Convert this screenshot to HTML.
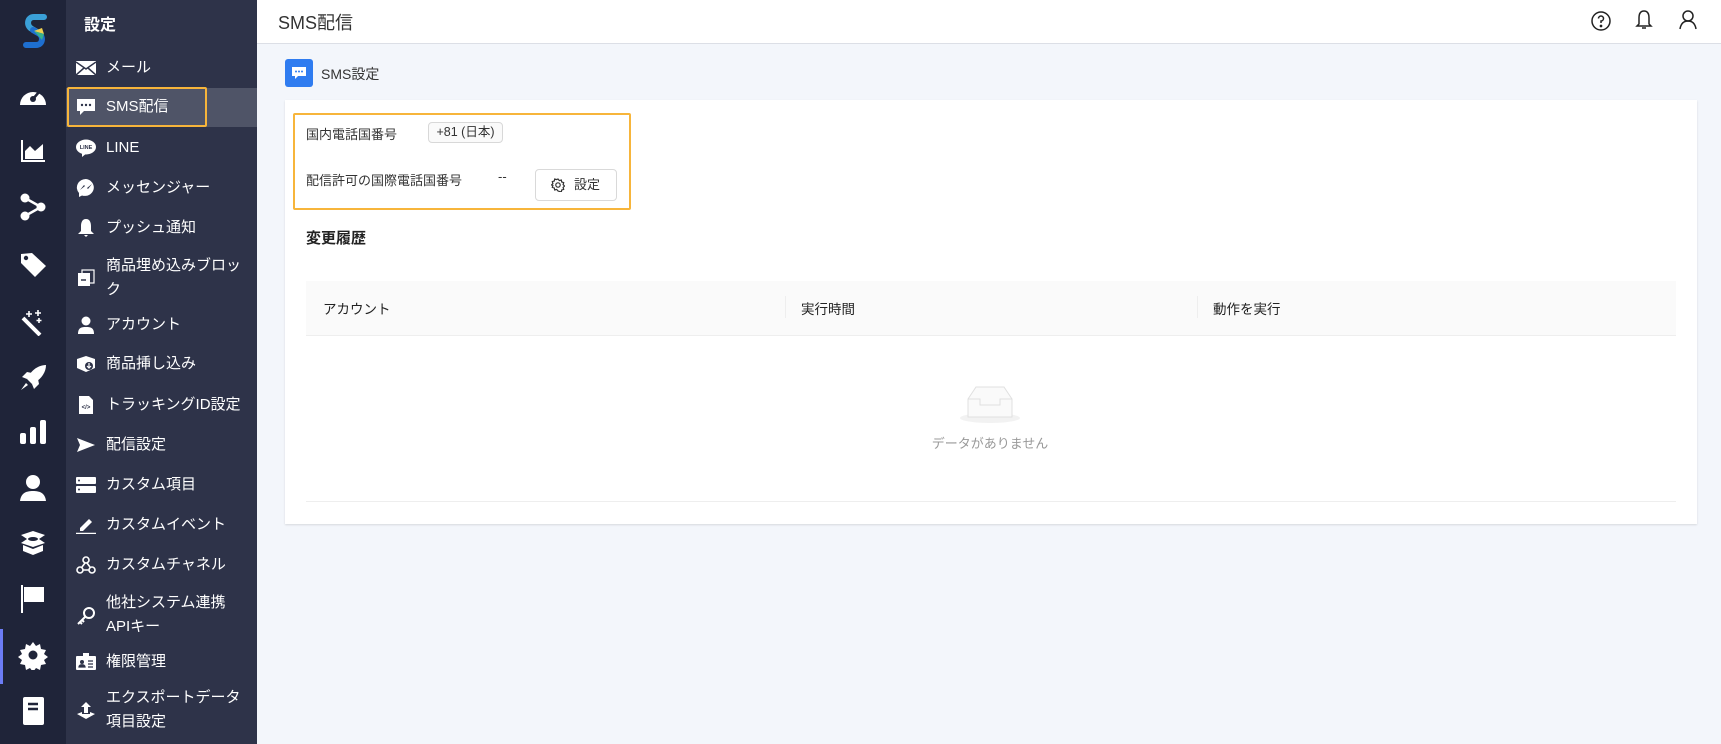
<!DOCTYPE html>
<html><head><meta charset="utf-8"><style>
*{box-sizing:border-box;margin:0;padding:0}
body{width:1721px;height:744px;overflow:hidden;background:#f3f6fb;font-family:"Liberation Sans","Noto Sans CJK JP",sans-serif;position:relative}
.rail{position:absolute;left:0;top:0;width:66px;height:744px;background:#1f2439}
.side{position:absolute;left:66px;top:0;width:191px;height:744px;background:#2e3349;color:#fff}
.ri{position:absolute;left:17px;width:32px;height:32px;display:flex;align-items:center;justify-content:center}
.it{position:absolute;left:0;width:191px;font-size:15px;color:#fff;line-height:24px;padding-left:40px}
.it .ic{position:absolute;left:10px;top:3px;width:20px;height:18px;display:flex;align-items:center;justify-content:center}
.hdr{position:absolute;left:257px;top:0;right:0;height:44px;background:#fff;border-bottom:1px solid #dcdfe6}
.card{position:absolute;left:285px;top:100px;width:1412px;height:424px;background:#fff;box-shadow:0 1px 2px rgba(0,0,0,.12)}
.t{position:absolute;font-size:13px;color:#333;white-space:nowrap}
</style></head><body>
<div class="rail">
 <svg style="position:absolute;left:22px;top:14px" width="26" height="34" viewBox="0 0 26 34"><path d="M22 3 H12 C5 3 4 12 10 15 L15 18" stroke="#3aa0d8" stroke-width="6" fill="none" stroke-linecap="round"/><path d="M4 31 H14 C21 31 22 22 16 19 L11 16" stroke="#1e6fd0" stroke-width="6" fill="none" stroke-linecap="round"/><path d="M12 17 L22 20 L20 14Z" fill="#f0d050"/><path d="M12 17 L20 26 L22 20Z" fill="#38b18a"/></svg>
 <div class="ri" style="top:79px"><svg width="30" height="24" viewBox="0 0 30 24"><path d="M2 22 A13 13 0 1 1 28 22 Z" fill="#fff"/><circle cx="15" cy="16" r="3" fill="#1f2439"/><path d="M15 16 L21 9" stroke="#1f2439" stroke-width="2.5"/></svg></div>
 <div class="ri" style="top:135px"><svg width="26" height="24" viewBox="0 0 26 24"><path d="M2 1 V22 H25" stroke="#fff" stroke-width="2" fill="none"/><path d="M5 20 V12 L10 7 L15 12 L23 5 V20Z" fill="#fff"/></svg></div>
 <div class="ri" style="top:191px"><svg width="28" height="28" viewBox="0 0 28 28"><circle cx="6" cy="5" r="4.5" fill="#fff"/><circle cx="6" cy="23" r="4.5" fill="#fff"/><circle cx="22" cy="14" r="4.5" fill="#fff"/><path d="M6 5 L22 14 L6 23" stroke="#fff" stroke-width="2.5" fill="none"/></svg></div>
 <div class="ri" style="top:249px"><svg width="28" height="28" viewBox="0 0 28 28"><path d="M2 3 V12 L16 26 L27 15 L13 2 Z" fill="#fff"/><circle cx="7" cy="7" r="2.2" fill="#1f2439"/></svg></div>
 <div class="ri" style="top:306px"><svg width="28" height="28" viewBox="0 0 28 28"><path d="M4 10 L21 27" stroke="#fff" stroke-width="4"/><path d="M10 3v6M7 6h6M19 2v6M16 5h6M20 10v5M17.5 12.5h5" stroke="#fff" stroke-width="1.6"/></svg></div>
 <div class="ri" style="top:362px"><svg width="28" height="28" viewBox="0 0 28 28"><path d="M27 1 C18 1 11 8 8 15 L13 20 C20 17 27 10 27 1Z" fill="#fff"/><path d="M8 15 L3 13 L8 8 L13 9Z M13 20 L15 25 L20 20 L19 15Z" fill="#fff"/><path d="M7 19 L2 26 L9 21Z" fill="#fff"/></svg></div>
 <div class="ri" style="top:416px"><svg width="28" height="26" viewBox="0 0 28 26"><rect x="1" y="14" width="6" height="11" rx="2" fill="#fff"/><rect x="11" y="8" width="6" height="17" rx="2" fill="#fff"/><rect x="21" y="1" width="6" height="24" rx="2" fill="#fff"/></svg></div>
 <div class="ri" style="top:472px"><svg width="28" height="28" viewBox="0 0 28 28"><circle cx="14" cy="8" r="7" fill="#fff"/><path d="M1 27 C2 19 7 17 14 17 C21 17 26 19 27 27Z" fill="#fff"/></svg></div>
 <div class="ri" style="top:527px"><svg width="28" height="26" viewBox="0 0 28 26"><path d="M2 5 L14 1 L26 5 L20 9 L26 13 L14 17 L2 13 L8 9Z" fill="#fff"/><path d="M4 15 L14 19 L24 15 V21 L14 25 L4 21Z" fill="#fff"/><ellipse cx="14" cy="9" rx="5" ry="2" fill="#1f2439"/></svg></div>
 <div class="ri" style="top:583px"><svg width="26" height="30" viewBox="0 0 26 30"><path d="M2 1 V29" stroke="#fff" stroke-width="2"/><path d="M4 3 H24 V18 H4Z" fill="#fff"/></svg></div>
 <div style="position:absolute;left:0;top:629px;width:3px;height:55px;background:#6c7cf5"></div>
 <div class="ri" style="top:639px"><svg width="30" height="30" viewBox="0 0 30 30"><path d="M15 2 l3 4 4-2 1 5 5 1-2 4 4 3-4 3 2 4-5 1-1 5-4-2-3 4-3-4-4 2-1-5-5-1 2-4-4-3 4-3-2-4 5-1 1-5 4 2z" fill="#fff"/><circle cx="15" cy="15" r="4.5" fill="#1f2439"/></svg></div>
 <div class="ri" style="top:695px"><svg width="26" height="30" viewBox="0 0 26 30"><rect x="3" y="1" width="21" height="28" rx="2" fill="#fff"/><path d="M8 8 H18 M8 13 H18" stroke="#1f2439" stroke-width="2.5"/></svg></div>
</div>
<div class="side">
 <div style="position:absolute;left:18px;top:11px;font-size:16px;font-weight:bold">設定</div>
 <div style="position:absolute;left:0;top:88px;width:191px;height:39px;background:#4f5467"></div>
 <div style="position:absolute;left:1px;top:87px;width:140px;height:40px;border:2px solid #f7b53b;border-radius:2px"></div>
 <div class="it" style="top:56px"><span class="ic"><svg width="20" height="16"><rect x="0" y="1" width="20" height="14" fill="#fff"/><path d="M0 2 L10 9 L20 2 M0 15 L8 8 M20 15 L12 8" stroke="#2e3349" stroke-width="1.5" fill="none"/></svg></span>メール</div>
 <div class="it" style="top:95px"><span class="ic"><svg width="20" height="18"><path d="M1 1 H19 V13 H8 L4 17 V13 H1Z" fill="#fff"/><circle cx="6" cy="7" r="1.2" fill="#2e3349"/><circle cx="10" cy="7" r="1.2" fill="#2e3349"/><circle cx="14" cy="7" r="1.2" fill="#2e3349"/></svg></span>SMS配信</div>
 <div class="it" style="top:136px"><span class="ic"><svg width="20" height="18"><ellipse cx="10" cy="8" rx="10" ry="7.5" fill="#fff"/><path d="M6 14 L6 18 L11 14Z" fill="#fff"/><text x="10" y="10" font-size="5.5" font-weight="bold" text-anchor="middle" fill="#2e3349" font-family="Liberation Sans">LINE</text></svg></span>LINE</div>
 <div class="it" style="top:176px"><span class="ic"><svg width="20" height="20"><path d="M10 1 A9 8.5 0 1 1 6 17.5 L3 19 L3 15 A9 8.5 0 0 1 10 1Z" fill="#fff"/><path d="M4 12 L8 7 L11 10 L16 6 L12 11 L9 8Z" fill="#2e3349"/></svg></span>メッセンジャー</div>
 <div class="it" style="top:216px"><span class="ic"><svg width="18" height="20"><path d="M9 1 C5 1 4 5 4 8 V13 L1 16 H17 L14 13 V8 C14 5 13 1 9 1Z M7 17 H11 L9 19Z" fill="#fff"/></svg></span>プッシュ通知</div>
 <div class="it" style="top:254px;line-height:24px"><span class="ic" style="top:15px"><svg width="18" height="18"><rect x="5" y="1" width="12" height="13" fill="none" stroke="#fff" stroke-width="1.2"/><rect x="1" y="4" width="12" height="13" fill="#fff"/><path d="M4 11 H9" stroke="#2e3349" stroke-width="1.5"/></svg></span>商品埋め込みブロッ<br>ク</div>
 <div class="it" style="top:313px"><span class="ic"><svg width="18" height="18"><circle cx="9" cy="5" r="4.5" fill="#fff"/><path d="M1 18 C1 12 4 11 9 11 C14 11 17 12 17 18Z" fill="#fff"/></svg></span>アカウント</div>
 <div class="it" style="top:352px"><span class="ic"><svg width="20" height="18"><path d="M1 4 L10 1 L19 4 V13 L10 17 L1 13Z" fill="#fff"/><circle cx="13" cy="11" r="4" fill="#2e3349"/><path d="M13 8 V13 M11 11 L13 13 L15 11" stroke="#fff" stroke-width="1.2" fill="none"/></svg></span>商品挿し込み</div>
 <div class="it" style="top:393px"><span class="ic"><svg width="16" height="20"><path d="M1 1 H11 L15 5 V19 H1Z" fill="#fff"/><text x="8" y="14" font-size="6" text-anchor="middle" fill="#2e3349" font-family="Liberation Sans" font-weight="bold">&lt;/&gt;</text></svg></span>トラッキングID設定</div>
 <div class="it" style="top:433px"><span class="ic"><svg width="20" height="16"><path d="M1 1 L19 8 L1 15 L4 8Z" fill="#fff"/></svg></span>配信設定</div>
 <div class="it" style="top:473px"><span class="ic"><svg width="20" height="18"><rect x="0" y="1" width="20" height="7" rx="1" fill="#fff"/><rect x="0" y="10" width="20" height="7" rx="1" fill="#fff"/><circle cx="3" cy="4.5" r="1" fill="#2e3349"/><circle cx="3" cy="13.5" r="1" fill="#2e3349"/></svg></span>カスタム項目</div>
 <div class="it" style="top:513px"><span class="ic"><svg width="20" height="18"><path d="M4 12 L13 3 L16 6 L7 15 H4Z" fill="#fff"/><path d="M0 17.5 H20" stroke="#fff" stroke-width="1.5"/></svg></span>カスタムイベント</div>
 <div class="it" style="top:553px"><span class="ic"><svg width="20" height="20" fill="none" stroke="#fff" stroke-width="1.6"><circle cx="10" cy="5" r="3"/><circle cx="4" cy="15" r="3"/><circle cx="16" cy="15" r="3"/><path d="M9 8 L6 12 M7 15 H13 M11 8 L14 12"/></svg></span>カスタムチャネル</div>
 <div class="it" style="top:591px;line-height:24px"><span class="ic" style="top:16px"><svg width="20" height="20"><circle cx="13" cy="7" r="5" fill="none" stroke="#fff" stroke-width="2"/><path d="M9 11 L2 18 M4 16 L6 18 M6 14 L8 16" stroke="#fff" stroke-width="2"/></svg></span>他社システム連携<br>APIキー</div>
 <div class="it" style="top:650px"><span class="ic"><svg width="20" height="18"><rect x="0" y="3" width="20" height="14" rx="1" fill="#fff"/><rect x="7" y="0" width="6" height="4" fill="#fff"/><circle cx="6" cy="9" r="2" fill="#2e3349"/><path d="M3 14 C3 11 9 11 9 14Z M12 8 H17 M12 11 H17 M12 14 H17" fill="#2e3349" stroke="#2e3349" stroke-width="1.3"/></svg></span>権限管理</div>
 <div class="it" style="top:686px;line-height:24px"><span class="ic" style="top:16px"><svg width="20" height="20"><path d="M10 1 L5 6 H8 V12 H12 V6 H15Z" fill="#fff"/><path d="M1 13 L6 11 V13 H14 V11 L19 13 L10 18Z" fill="#fff"/></svg></span>エクスポートデータ<br>項目設定</div>
</div>
<div class="hdr">
 <div style="position:absolute;left:21px;top:9px;font-size:18px;color:#333">SMS配信</div>
 <svg style="position:absolute;left:1333px;top:10px" width="22" height="22" fill="none" stroke="#222" stroke-width="1.5"><circle cx="11" cy="11" r="9"/><path d="M8.5 8.5 A2.5 2.5 0 1 1 11 11 V13"/><circle cx="11" cy="16" r=".6" fill="#222"/></svg>
 <svg style="position:absolute;left:1377px;top:9px" width="20" height="22" fill="none" stroke="#222" stroke-width="1.5"><path d="M10 2 C6 2 5 5 5 9 V15 L3 17 H17 L15 15 V9 C15 5 14 2 10 2Z M8 19 H12"/></svg>
 <svg style="position:absolute;left:1421px;top:9px" width="20" height="22" fill="none" stroke="#222" stroke-width="1.5"><circle cx="10" cy="7" r="5"/><path d="M2 20 C3 14 6 12 10 12 C14 12 17 14 18 20"/></svg>
</div>
<div style="position:absolute;left:285px;top:59px;width:28px;height:28px;background:#2f7cf0;border-radius:3px"><svg width="28" height="28"><path d="M7 8 H21 V17 H13 L10 20 V17 H7Z" fill="#fff"/><circle cx="11" cy="12.5" r="1" fill="#2f7cf0"/><circle cx="14" cy="12.5" r="1" fill="#2f7cf0"/><circle cx="17" cy="12.5" r="1" fill="#2f7cf0"/></svg></div>
<div class="t" style="left:321px;top:64px;font-size:14px">SMS設定</div>
<div class="card">
 <div style="position:absolute;left:8px;top:13px;width:338px;height:97px;border:2px solid #f7b53b;border-radius:2px"></div>
 <div class="t" style="left:21px;top:24px">国内電話国番号</div>
 <div style="position:absolute;left:143px;top:22px;width:75px;height:21px;border:1px solid #d8d8d8;border-radius:4px;background:#fafafa;font-size:12.5px;color:#333;text-align:center;line-height:19px">+81 (日本)</div>
 <div class="t" style="left:21px;top:70px">配信許可の国際電話国番号</div>
 <div class="t" style="left:213px;top:69px">--</div>
 <div style="position:absolute;left:250px;top:69px;width:82px;height:32px;border:1px solid #d9d9d9;border-radius:4px;background:#fff;font-size:13px;color:#333;line-height:30px;padding-left:38px"><svg style="position:absolute;left:15px;top:8px" width="14" height="14" fill="none" stroke="#333" stroke-width="1.2"><path d="M7 1 l1.3 1.6 2-.6.4 2 2 .6-.6 2 1.4 1.4-1.4 1.4.6 2-2 .6-.4 2-2-.6L7 13l-1.3-1.6-2 .6-.4-2-2-.6.6-2L.5 7l1.4-1.4-.6-2 2-.6.4-2 2 .6z"/><circle cx="7" cy="7" r="2.2"/></svg>設定</div>
 <div class="t" style="left:21px;top:127px;font-size:15px;font-weight:bold;color:#222">変更履歴</div>
 <div style="position:absolute;left:21px;top:181px;width:1370px;height:55px;background:#fafafa;border-bottom:1px solid #eee"></div>
 <div class="t" style="left:38px;top:198px;font-size:13.5px;color:#222">アカウント</div>
 <div style="position:absolute;left:500px;top:196px;width:1px;height:22px;background:#eee"></div>
 <div class="t" style="left:500px;top:198px;padding-left:16px;font-size:13.5px;color:#222">実行時間</div>
 <div style="position:absolute;left:912px;top:196px;width:1px;height:22px;background:#eee"></div>
 <div class="t" style="left:928px;top:198px;font-size:13.5px;color:#222">動作を実行</div>
 <svg style="position:absolute;left:673px;top:283px" width="64" height="42"><ellipse cx="32" cy="35" rx="30" ry="5" fill="#f2f2f2"/><path d="M10 16 L18 4 H46 L54 16 V34 H10Z" fill="#fafafa" stroke="#e0e0e0"/><path d="M10 16 H22 V22 H42 V16 H54" fill="none" stroke="#e0e0e0"/></svg>
 <div class="t" style="left:641px;top:333px;color:#999;font-size:13px;width:128px;text-align:center">データがありません</div>
 <div style="position:absolute;left:21px;top:401px;width:1370px;height:1px;background:#eee"></div>
</div>
</body></html>
